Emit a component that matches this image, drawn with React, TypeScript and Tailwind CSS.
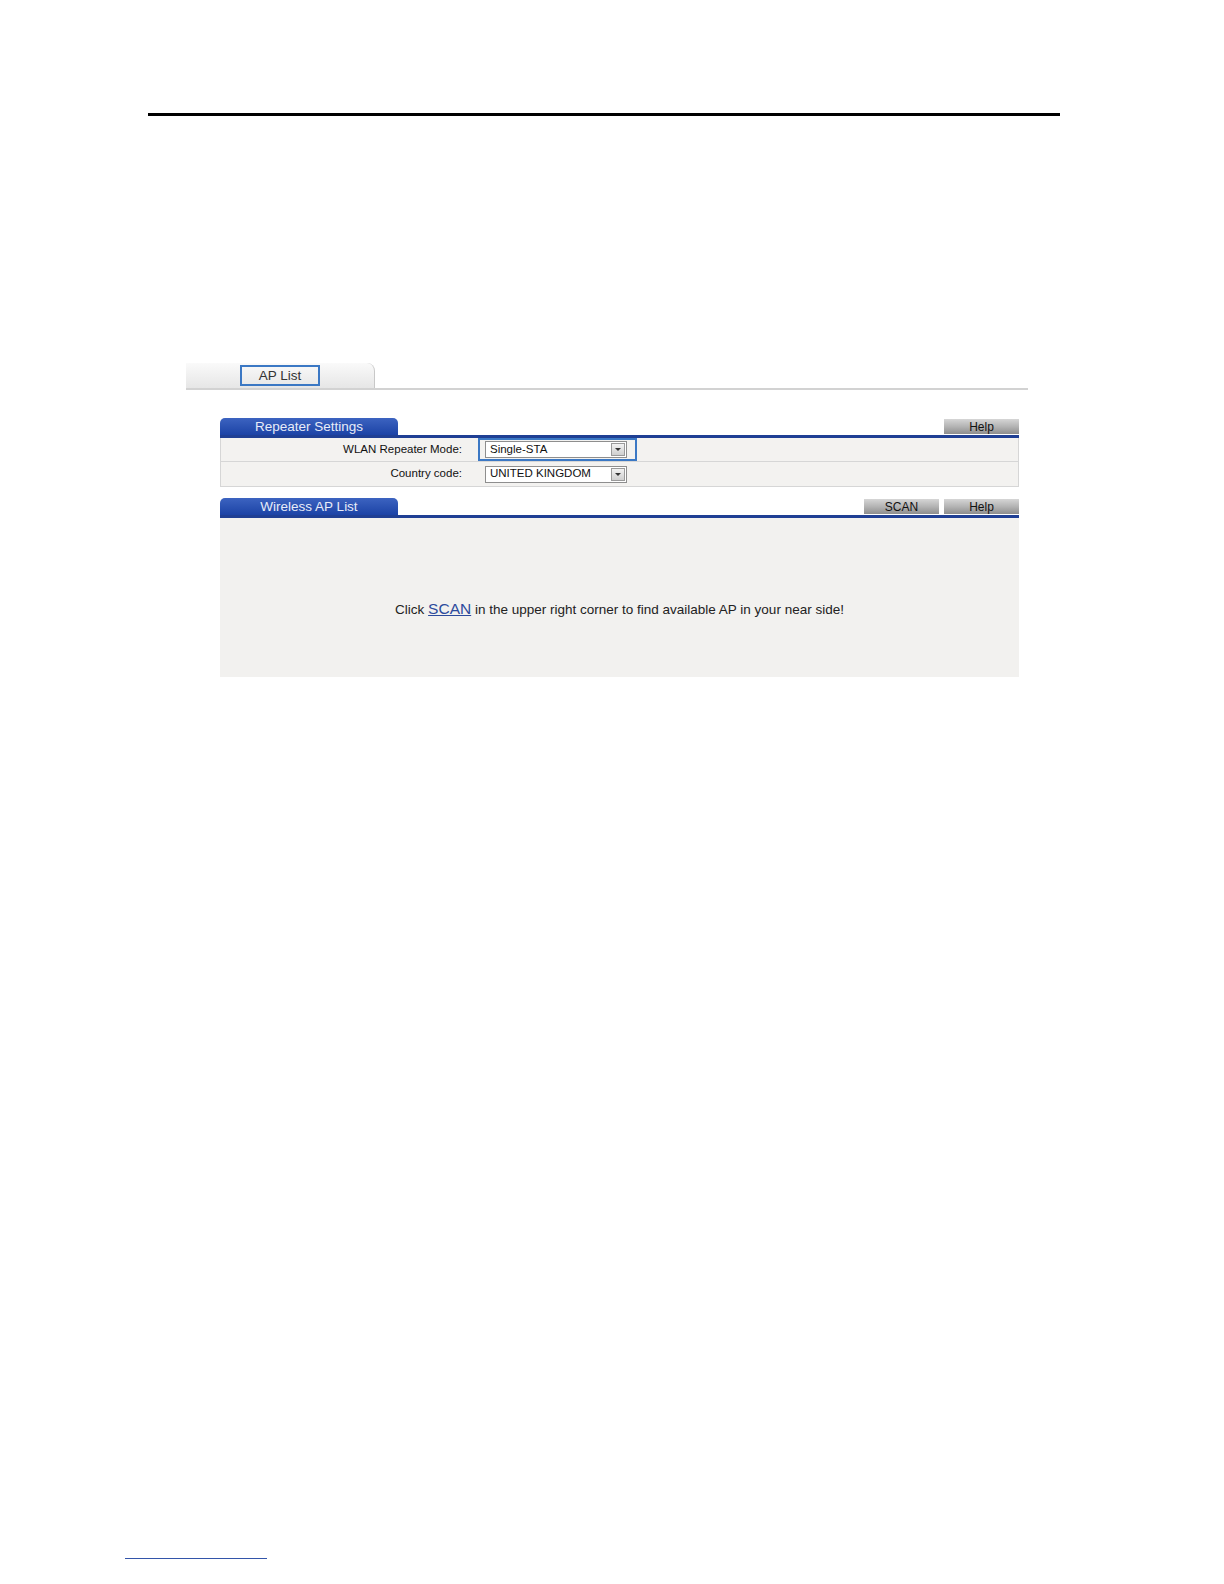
import { ReactNode } from 'react'

const FONT = { fontFamily: '"Liberation Sans", Arial, sans-serif' }

function GrayButton({ children }: { children: ReactNode }) {
  return (
    <div className="flex h-[15px] w-[75px] items-center justify-center bg-gradient-to-b from-[#d6d6d6] via-[#b4b4b4] to-[#8e8e8e] text-[12px] leading-none text-[#111]">
      {children}
    </div>
  )
}

function SectionHeader({ title, buttons }: { title: string; buttons: string[] }) {
  return (
    <div className="flex items-end border-b-[3px] border-[#1f3f94]">
      <div className="flex h-[17px] w-[178px] items-center justify-center rounded-t-[5px] bg-gradient-to-b from-[#3c63c0] to-[#1c43a6] text-[13.5px] leading-none text-[#e8ecf8]">
        {title}
      </div>
      <div className="flex-1" />
      <div className="mb-[1px] flex gap-[5px]">
        {buttons.map((b) => (
          <GrayButton key={b}>{b}</GrayButton>
        ))}
      </div>
    </div>
  )
}

function FakeSelect({ value }: { value: string }) {
  return (
    <div className="flex h-[17px] w-[142px] items-center border border-[#8e8e8e] bg-white">
      <span className="flex-1 pl-[4px] text-[11.5px] leading-none text-[#111]">{value}</span>
      <div className="mr-[1px] flex h-[13px] w-[14px] items-center justify-center border border-[#9a9a9a] bg-gradient-to-b from-[#f2f2f2] to-[#cfcfcf]">
        <div className="h-0 w-0 border-x-[3px] border-t-[3px] border-x-transparent border-t-[#333]" />
      </div>
    </div>
  )
}

function Row({ label, children, last }: { label: string; children: ReactNode; last?: boolean }) {
  return (
    <div className={'flex h-[24px] items-center bg-[#f3f2f0] ' + (last ? '' : 'border-b border-[#d6d6d6]')}>
      <div className="w-[241px] text-right text-[11.5px] leading-none text-[#111]">{label}</div>
      <div className="ml-[23px]">{children}</div>
    </div>
  )
}

export default function App() {
  return (
    <div className="relative h-[1584px] w-full overflow-hidden bg-white" style={FONT}>
      <div className="pt-[113px]">
        <div className="ml-[148px] h-[3px] w-[912px] bg-black" />
      </div>

      {/* tab bar */}
      <div className="ml-[186px] mt-[247px] w-[842px]">
        <div className="flex h-[25px] items-end">
          <div className="flex h-[25px] w-[189px] items-center rounded-tr-[8px] border-r border-[#c8c8c8] bg-gradient-to-b from-[#fafafa] to-[#e6e6e6]">
            <div className="ml-[54px] flex h-[21px] w-[80px] items-center justify-center border-2 border-[#3b78c4] text-[13.5px] leading-none text-[#333]">
              AP List
            </div>
          </div>
        </div>
        <div className="h-[2px] bg-[#d2d2d2]" />
      </div>

      {/* repeater settings */}
      <div className="ml-[220px] mt-[28px] w-[799px]">
        <SectionHeader title="Repeater Settings" buttons={['Help']} />
        <div className="border-x border-b border-[#d6d6d6]">
          <Row label="WLAN Repeater Mode:">
            <div className="relative">
              <FakeSelect value="Single-STA" />
              <div className="pointer-events-none absolute -left-[7px] -top-[3px] h-[23px] w-[159px] border-2 border-[#3b78c4]" />
            </div>
          </Row>
          <Row label="Country code:" last>
            <FakeSelect value="UNITED KINGDOM" />
          </Row>
        </div>
      </div>

      {/* wireless ap list */}
      <div className="ml-[220px] mt-[11px] w-[799px]">
        <SectionHeader title="Wireless AP List" buttons={['SCAN', 'Help']} />
        <div className="flex h-[159px] items-center justify-center bg-[#f2f1ef] pt-[22px] text-[13.5px] text-[#222]">
          <span>
            Click{' '}
            <span className="text-[15.5px] text-[#2c4a9c] underline">SCAN</span>
            {' '}in the upper right corner to find available AP in your near side!
          </span>
        </div>
      </div>

      <div className="absolute left-[125px] top-[1558px] h-[1px] w-[142px] bg-[#3355aa]" />
    </div>
  )
}
